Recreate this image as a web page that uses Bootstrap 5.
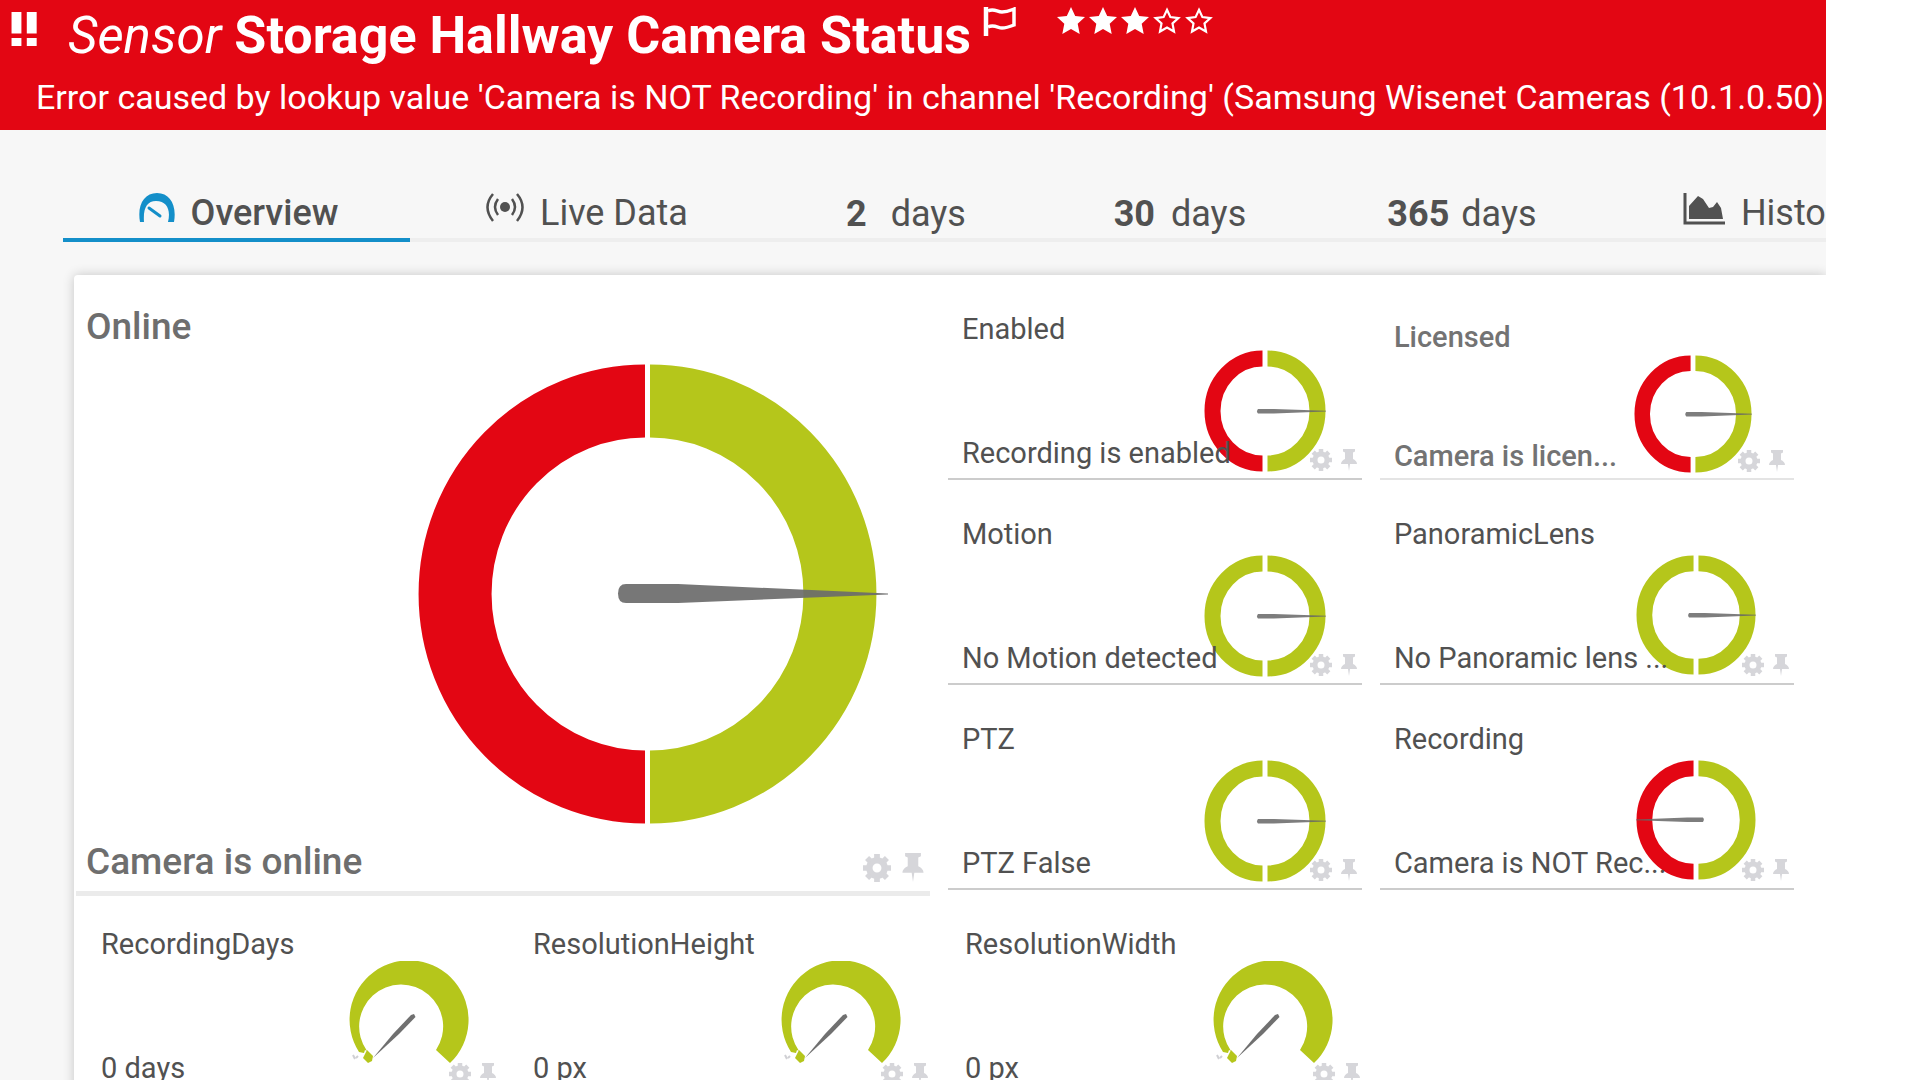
<!DOCTYPE html>
<html lang="en">
<head>
<meta charset="utf-8">
<meta name="viewport" content="width=device-width, initial-scale=1">
<title>Storage Hallway Camera Status</title>
<link href="https://cdn.jsdelivr.net/npm/bootstrap@5.3.0/dist/css/bootstrap.min.css" rel="stylesheet">
<style>
  :root { --down: #e30613; --up: #b5c61b; --ink: #515151; --accent: #148fc9; }
  body { font-family: Roboto, "Liberation Sans", sans-serif; color: var(--ink); background: #fff; }
  svg { display: block; flex-shrink: 0; }
  .app { width: 95.1%; height: 100vh; background: #f7f7f7; }

  .status-head { background: var(--down); color: #fff; padding: 0 0 8px 10px; }
  .status-title { font-size: 52px; line-height: 72px; padding-left: 4px; }
  .status-title .kind { font-size: 51px; font-style: italic; }
  .head-icons { padding: 7px 0 0 12px; }
  .status-msg { font-size: 34px; line-height: 50px; padding-left: 26px; }

  .main-area { padding-left: 63px; }
  .tabs-bar { padding-top: 59px; }
  .tabs-bar .nav-item { min-width: 0; }
  .tabs-bar .nav-link { font-size: 36px; line-height: 48px; padding: 0; color: var(--ink); border-bottom: 4px solid #eee; height: 53px; }
  .tabs-bar .nav-link.active { font-weight: 500; border-color: var(--accent); }
  .tabs-bar .nav-link.active svg { color: var(--accent); }
  .tabs-bar .nav-days { padding-top: 1px; }

  .panel { margin: 33px 0 0 11px; background: #fff; border-top-left-radius: 4px; box-shadow: 0 0 12px rgba(0,0,0,.2); }
  .upper { display: grid; grid-template-columns: 854fr 846fr; column-gap: 18px; padding: 0 32px 0 2px; align-items: start; }
  .pairs { display: grid; grid-template-columns: 1fr 1fr; column-gap: 18px; }
  .lower { display: grid; grid-template-columns: repeat(4, 1fr); column-gap: 18px; padding: 0 27px 0 15px; }

  .tile { display: grid; height: 205px; border-bottom: 2px solid #ccc; font-size: 29px; line-height: 36px; }
  .tile > * { grid-area: 1 / 1; }
  .tile-text { z-index: 1; padding: 36px 0 7px 14px; white-space: nowrap; }
  .tile-gauge { place-self: end; margin: 0 36px 6px 0; }
  .tile-gauge.slim { margin: 0 38px 8px 0; }
  .tile-tools { z-index: 1; place-self: end; margin: 0 4px 7px 0; gap: 8px; }
  .tile-tools .btn { color: #d6d6da; }
  .tile-soft { border-color: #e4e4e4; color: #737373; font-weight: 500; }
  .tile-soft .tile-text { padding: 44px 0 4px 14px; }
  .tile-soft .tile-gauge.slim { margin: 0 42px 5px 0; }
  .tile-soft .tile-tools { margin: 0 8px 6px 0; }
  .lower .tile { height: 199px; border-color: transparent; }
  .lower .tile-text { padding: 30px 0 7px 12px; }
  .lower .tile-gauge { margin: 0 34px 12px 0; }
  .lower .tile-tools { margin: 0 6px 8px 0; }
  .tile-big { height: 621px; border-bottom: 5px solid #ebebeb; font-size: 37px; font-weight: 500; color: #6e6e6e; line-height: 48px; }
  .tile-big .tile-text { padding: 28px 0 5px 10px; }
  .tile-big .tile-gauge { margin: 0 40px 67px 0; }
  .tile-big .tile-tools { margin: 0 5px 9px 0; gap: 10px; }
</style>
<script src="https://cdn.jsdelivr.net/npm/bootstrap@5.3.0/dist/js/bootstrap.bundle.min.js"></script>
</head>
<body>
<svg width="0" height="0" class="position-absolute" aria-hidden="true">
  <symbol id="gear" viewBox="0 0 22 22"><circle cx="11" cy="11" r="6" fill="none" stroke="currentColor" stroke-width="5"/><path d="M11 0v4M11 18v4M0 11h4M18 11h4M3.200 3.200l3 3M15.800 15.800l3 3M3.200 18.800l3-3M15.800 6.200l3-3" stroke="currentColor" stroke-width="4.500"/></symbol>
  <symbol id="pin" viewBox="0 0 18 22"><path fill="currentColor" d="M3 0h12v2.500l-2 1V10c2 1 4 2.500 4 5h-7l-1 7-1-7H1c0-2.500 2-4 4-5V3.500l-2-1z"/></symbol>
  <symbol id="star" viewBox="0 0 28 27"><path fill="currentColor" d="M14 0l4.200 9 9.800 1.100-7.300 6.700L22.700 27 14 22l-8.700 5 2-10.200L0 10.100 9.800 9z"/></symbol>
  <symbol id="star-o" viewBox="0 0 28 27"><path fill="none" stroke="currentColor" stroke-width="2.200" d="M14 2.800l3.400 7.300 8 1-5.900 5.400 1.500 8-7-4-7 4 1.500-8-5.900-5.400 8-1z"/></symbol>
  <symbol id="right-needle" viewBox="0 0 122 122"><path fill="#666" d="M54 59h16l52 1.700v.8L70 63.500H54q-2-2 0-4.500z" opacity=".85"/></symbol>
  <symbol id="split-ok" viewBox="0 0 122 122"><path fill="none" stroke="#b5c61b" stroke-width="16" d="M58.500 8.500A50 52.500 0 0 0 58.500 113.500M63.500 8.500A50 52.500 0 0 1 63.500 113.500"/></symbol>
  <symbol id="split-bad" viewBox="0 0 122 122"><path fill="none" stroke="#e30613" stroke-width="16" d="M58.500 8.500A50 52.500 0 0 0 58.500 113.500"/><path fill="none" stroke="#b5c61b" stroke-width="16" d="M63.500 8.500A50 52.500 0 0 1 63.500 113.500"/></symbol>
  <symbol id="dial" viewBox="0 0 120 120"><path fill="#b5c61b" d="M10 91A59.500 59.500 0 1 1 101 102L87 89A42 42 0 1 0 18 90l-2-1-1 3z"/><path fill="#b5c61b" d="M18 89l6 6-1 5-4 2-5-5z"/><path fill="#707070" d="M65 53l1.500 3L50 73 24 97l20-24L62 54z"/><path stroke="#d0d0d4" stroke-width="2" d="M4 94l2 4M7 97l2-2" fill="none"/></symbol>
</svg>

<div class="app overflow-hidden">
  <header class="status-head">
    <div class="d-flex align-items-start text-nowrap">
      <svg width="30" height="39" viewBox="0 0 30 39" class="mt-2 pt-1 me-4" fill="#fff" role="img" aria-label="Down"><path d="M0 0h11v24H0zM17 0h11v24H17zM0 29h11v9H0zM17 29h11v9H17z"/></svg>
      <h1 class="status-title fw-bold m-0"><span class="kind fw-normal">Sensor</span> Storage Hallway Camera Status</h1>
      <div class="head-icons d-flex align-items-start">
        <button class="btn p-0 border-0 text-white me-4" aria-label="Flag"><svg width="34" height="29" viewBox="0 0 34 29" fill="none" stroke="currentColor" stroke-width="3.500"><path d="M3 0v29" stroke-width="4.500"/><path d="M5 4c6-3 9 1 14 1s7-1 12-3v16c-5 2-8 3-12 3s-8-4-14-1"/></svg></button>
        <div class="d-flex gap-1 ps-3" role="img" aria-label="Priority 3 of 5">
          <svg width="28" height="27"><use href="#star"/></svg><svg width="28" height="27"><use href="#star"/></svg><svg width="28" height="27"><use href="#star"/></svg><svg width="28" height="27"><use href="#star-o"/></svg><svg width="28" height="27"><use href="#star-o"/></svg>
        </div>
      </div>
    </div>
    <p class="status-msg text-nowrap m-0">Error caused by lookup value 'Camera is NOT Recording' in channel 'Recording' (Samsung Wisenet Cameras (10.1.0.50)</p>
  </header>

  <main class="main-area">
    <ul class="tabs-bar nav flex-nowrap text-nowrap">
      <li class="nav-item" style="flex:347 1 0"><a class="nav-link active d-flex justify-content-center gap-3 ps-1" href="#"><svg width="36" height="30" viewBox="0 0 36 30" class="mt-1"><path fill="currentColor" d="M1 29C-2 12 5 0 18 0s20 12 17 29h-6c3-12-1-21-12-21C8 8 4 15 5 29z"/><path d="M10 15l11 8" stroke="currentColor" stroke-width="3" stroke-linecap="round"/></svg>Overview</a></li>
      <li class="nav-item" style="flex:354 1 0"><a class="nav-link d-flex justify-content-center gap-3" href="#"><svg width="38" height="30" viewBox="0 0 38 30" class="mt-1" fill="none" stroke="currentColor" stroke-width="2.500"><circle cx="19" cy="14" r="5" fill="currentColor" stroke="none"/><path d="M12 6q-6 8 0 16M26 6q6 8 0 16M7 1q-11 13 0 27M31 1q11 13 0 27"/></svg>Live Data</a></li>
      <li class="nav-item" style="flex:284 1 0"><a class="nav-link nav-days d-flex justify-content-center gap-4" href="#"><b>2</b>days</a></li>
      <li class="nav-item" style="flex:264 1 0"><a class="nav-link nav-days d-flex justify-content-center gap-3" href="#"><b>30</b>days</a></li>
      <li class="nav-item" style="flex:300 1 0"><a class="nav-link nav-days d-flex justify-content-center gap-2" href="#"><b>365</b><span class="ps-1">days</span></a></li>
      <li class="nav-item" style="flex:214 1 0"><a class="nav-link d-flex justify-content-end gap-3" href="#"><svg width="42" height="32" viewBox="0 0 42 32" class="mt-1"><path fill="none" stroke="currentColor" stroke-width="3" d="M2 0v30h40"/><path fill="currentColor" d="M6 26V13L15 3l5 3 6 9 4-1 4-5 4 6 2 11z"/></svg>Histo</a></li>
    </ul>

    <section class="panel">
      <div class="upper">
        <article class="tile tile-big">
          <div class="tile-text d-flex flex-column justify-content-between"><span>Online</span><span>Camera is online</span></div>
          <svg class="tile-gauge" width="472" height="460" viewBox="0 0 472 460"><path fill="none" stroke="#e30613" stroke-width="73" d="M227 37A190 193 0 0 0 227 423"/><path fill="none" stroke="#b5c61b" stroke-width="73" d="M232 37A190 193 0 0 1 232 423"/><path fill="#6b6b6b" fill-opacity=".92" d="M208 220h52l210 9.500v1L260 239h-52q-8 0-8-9.500t8-9.500z"/></svg>
          <div class="tile-tools d-flex"><button class="btn p-0 border-0" aria-label="Settings"><svg width="28" height="28"><use href="#gear"/></svg></button><button class="btn p-0 border-0" aria-label="Pin"><svg width="24" height="29"><use href="#pin"/></svg></button></div>
        </article>
        <div class="pairs">
          <article class="tile">
            <div class="tile-text d-flex flex-column justify-content-between"><span>Enabled</span><span>Recording is enabled</span></div>
            <svg class="tile-gauge" width="122" height="122"><use href="#split-bad"/><use href="#right-needle"/></svg>
            <div class="tile-tools d-flex"><button class="btn p-0 border-0" aria-label="Settings"><svg width="22" height="22"><use href="#gear"/></svg></button><button class="btn p-0 border-0" aria-label="Pin"><svg width="18" height="22"><use href="#pin"/></svg></button></div>
          </article>
          <article class="tile tile-soft">
            <div class="tile-text d-flex flex-column justify-content-between"><span>Licensed</span><span>Camera is licen...</span></div>
            <svg class="tile-gauge slim" width="118" height="118"><use href="#split-bad"/><use href="#right-needle"/></svg>
            <div class="tile-tools d-flex"><button class="btn p-0 border-0" aria-label="Settings"><svg width="22" height="22"><use href="#gear"/></svg></button><button class="btn p-0 border-0" aria-label="Pin"><svg width="18" height="22"><use href="#pin"/></svg></button></div>
          </article>
          <article class="tile">
            <div class="tile-text d-flex flex-column justify-content-between"><span>Motion</span><span>No Motion detected</span></div>
            <svg class="tile-gauge" width="122" height="122"><use href="#split-ok"/><use href="#right-needle"/></svg>
            <div class="tile-tools d-flex"><button class="btn p-0 border-0" aria-label="Settings"><svg width="22" height="22"><use href="#gear"/></svg></button><button class="btn p-0 border-0" aria-label="Pin"><svg width="18" height="22"><use href="#pin"/></svg></button></div>
          </article>
          <article class="tile">
            <div class="tile-text d-flex flex-column justify-content-between"><span>PanoramicLens</span><span>No Panoramic lens ...</span></div>
            <svg class="tile-gauge slim" width="120" height="120"><use href="#split-ok"/><use href="#right-needle"/></svg>
            <div class="tile-tools d-flex"><button class="btn p-0 border-0" aria-label="Settings"><svg width="22" height="22"><use href="#gear"/></svg></button><button class="btn p-0 border-0" aria-label="Pin"><svg width="18" height="22"><use href="#pin"/></svg></button></div>
          </article>
          <article class="tile">
            <div class="tile-text d-flex flex-column justify-content-between"><span>PTZ</span><span>PTZ False</span></div>
            <svg class="tile-gauge" width="122" height="122"><use href="#split-ok"/><use href="#right-needle"/></svg>
            <div class="tile-tools d-flex"><button class="btn p-0 border-0" aria-label="Settings"><svg width="22" height="22"><use href="#gear"/></svg></button><button class="btn p-0 border-0" aria-label="Pin"><svg width="18" height="22"><use href="#pin"/></svg></button></div>
          </article>
          <article class="tile">
            <div class="tile-text d-flex flex-column justify-content-between"><span>Recording</span><span>Camera is NOT Rec...</span></div>
            <svg class="tile-gauge slim" width="120" height="120" viewBox="0 0 122 122"><use href="#split-bad"/><use href="#right-needle" transform="rotate(180 61 61)"/></svg>
            <div class="tile-tools d-flex"><button class="btn p-0 border-0" aria-label="Settings"><svg width="22" height="22"><use href="#gear"/></svg></button><button class="btn p-0 border-0" aria-label="Pin"><svg width="18" height="22"><use href="#pin"/></svg></button></div>
          </article>
        </div>
      </div>
      <div class="lower">
        <article class="tile">
          <div class="tile-text d-flex flex-column justify-content-between"><span>RecordingDays</span><span>0 days</span></div>
          <svg class="tile-gauge" width="120" height="120"><use href="#dial"/></svg>
          <div class="tile-tools d-flex"><button class="btn p-0 border-0" aria-label="Settings"><svg width="22" height="22"><use href="#gear"/></svg></button><button class="btn p-0 border-0" aria-label="Pin"><svg width="18" height="22"><use href="#pin"/></svg></button></div>
        </article>
        <article class="tile">
          <div class="tile-text d-flex flex-column justify-content-between"><span>ResolutionHeight</span><span>0 px</span></div>
          <svg class="tile-gauge" width="120" height="120"><use href="#dial"/></svg>
          <div class="tile-tools d-flex"><button class="btn p-0 border-0" aria-label="Settings"><svg width="22" height="22"><use href="#gear"/></svg></button><button class="btn p-0 border-0" aria-label="Pin"><svg width="18" height="22"><use href="#pin"/></svg></button></div>
        </article>
        <article class="tile">
          <div class="tile-text d-flex flex-column justify-content-between"><span>ResolutionWidth</span><span>0 px</span></div>
          <svg class="tile-gauge" width="120" height="120"><use href="#dial"/></svg>
          <div class="tile-tools d-flex"><button class="btn p-0 border-0" aria-label="Settings"><svg width="22" height="22"><use href="#gear"/></svg></button><button class="btn p-0 border-0" aria-label="Pin"><svg width="18" height="22"><use href="#pin"/></svg></button></div>
        </article>
      </div>
    </section>
  </main>
</div>
</body>
</html>
